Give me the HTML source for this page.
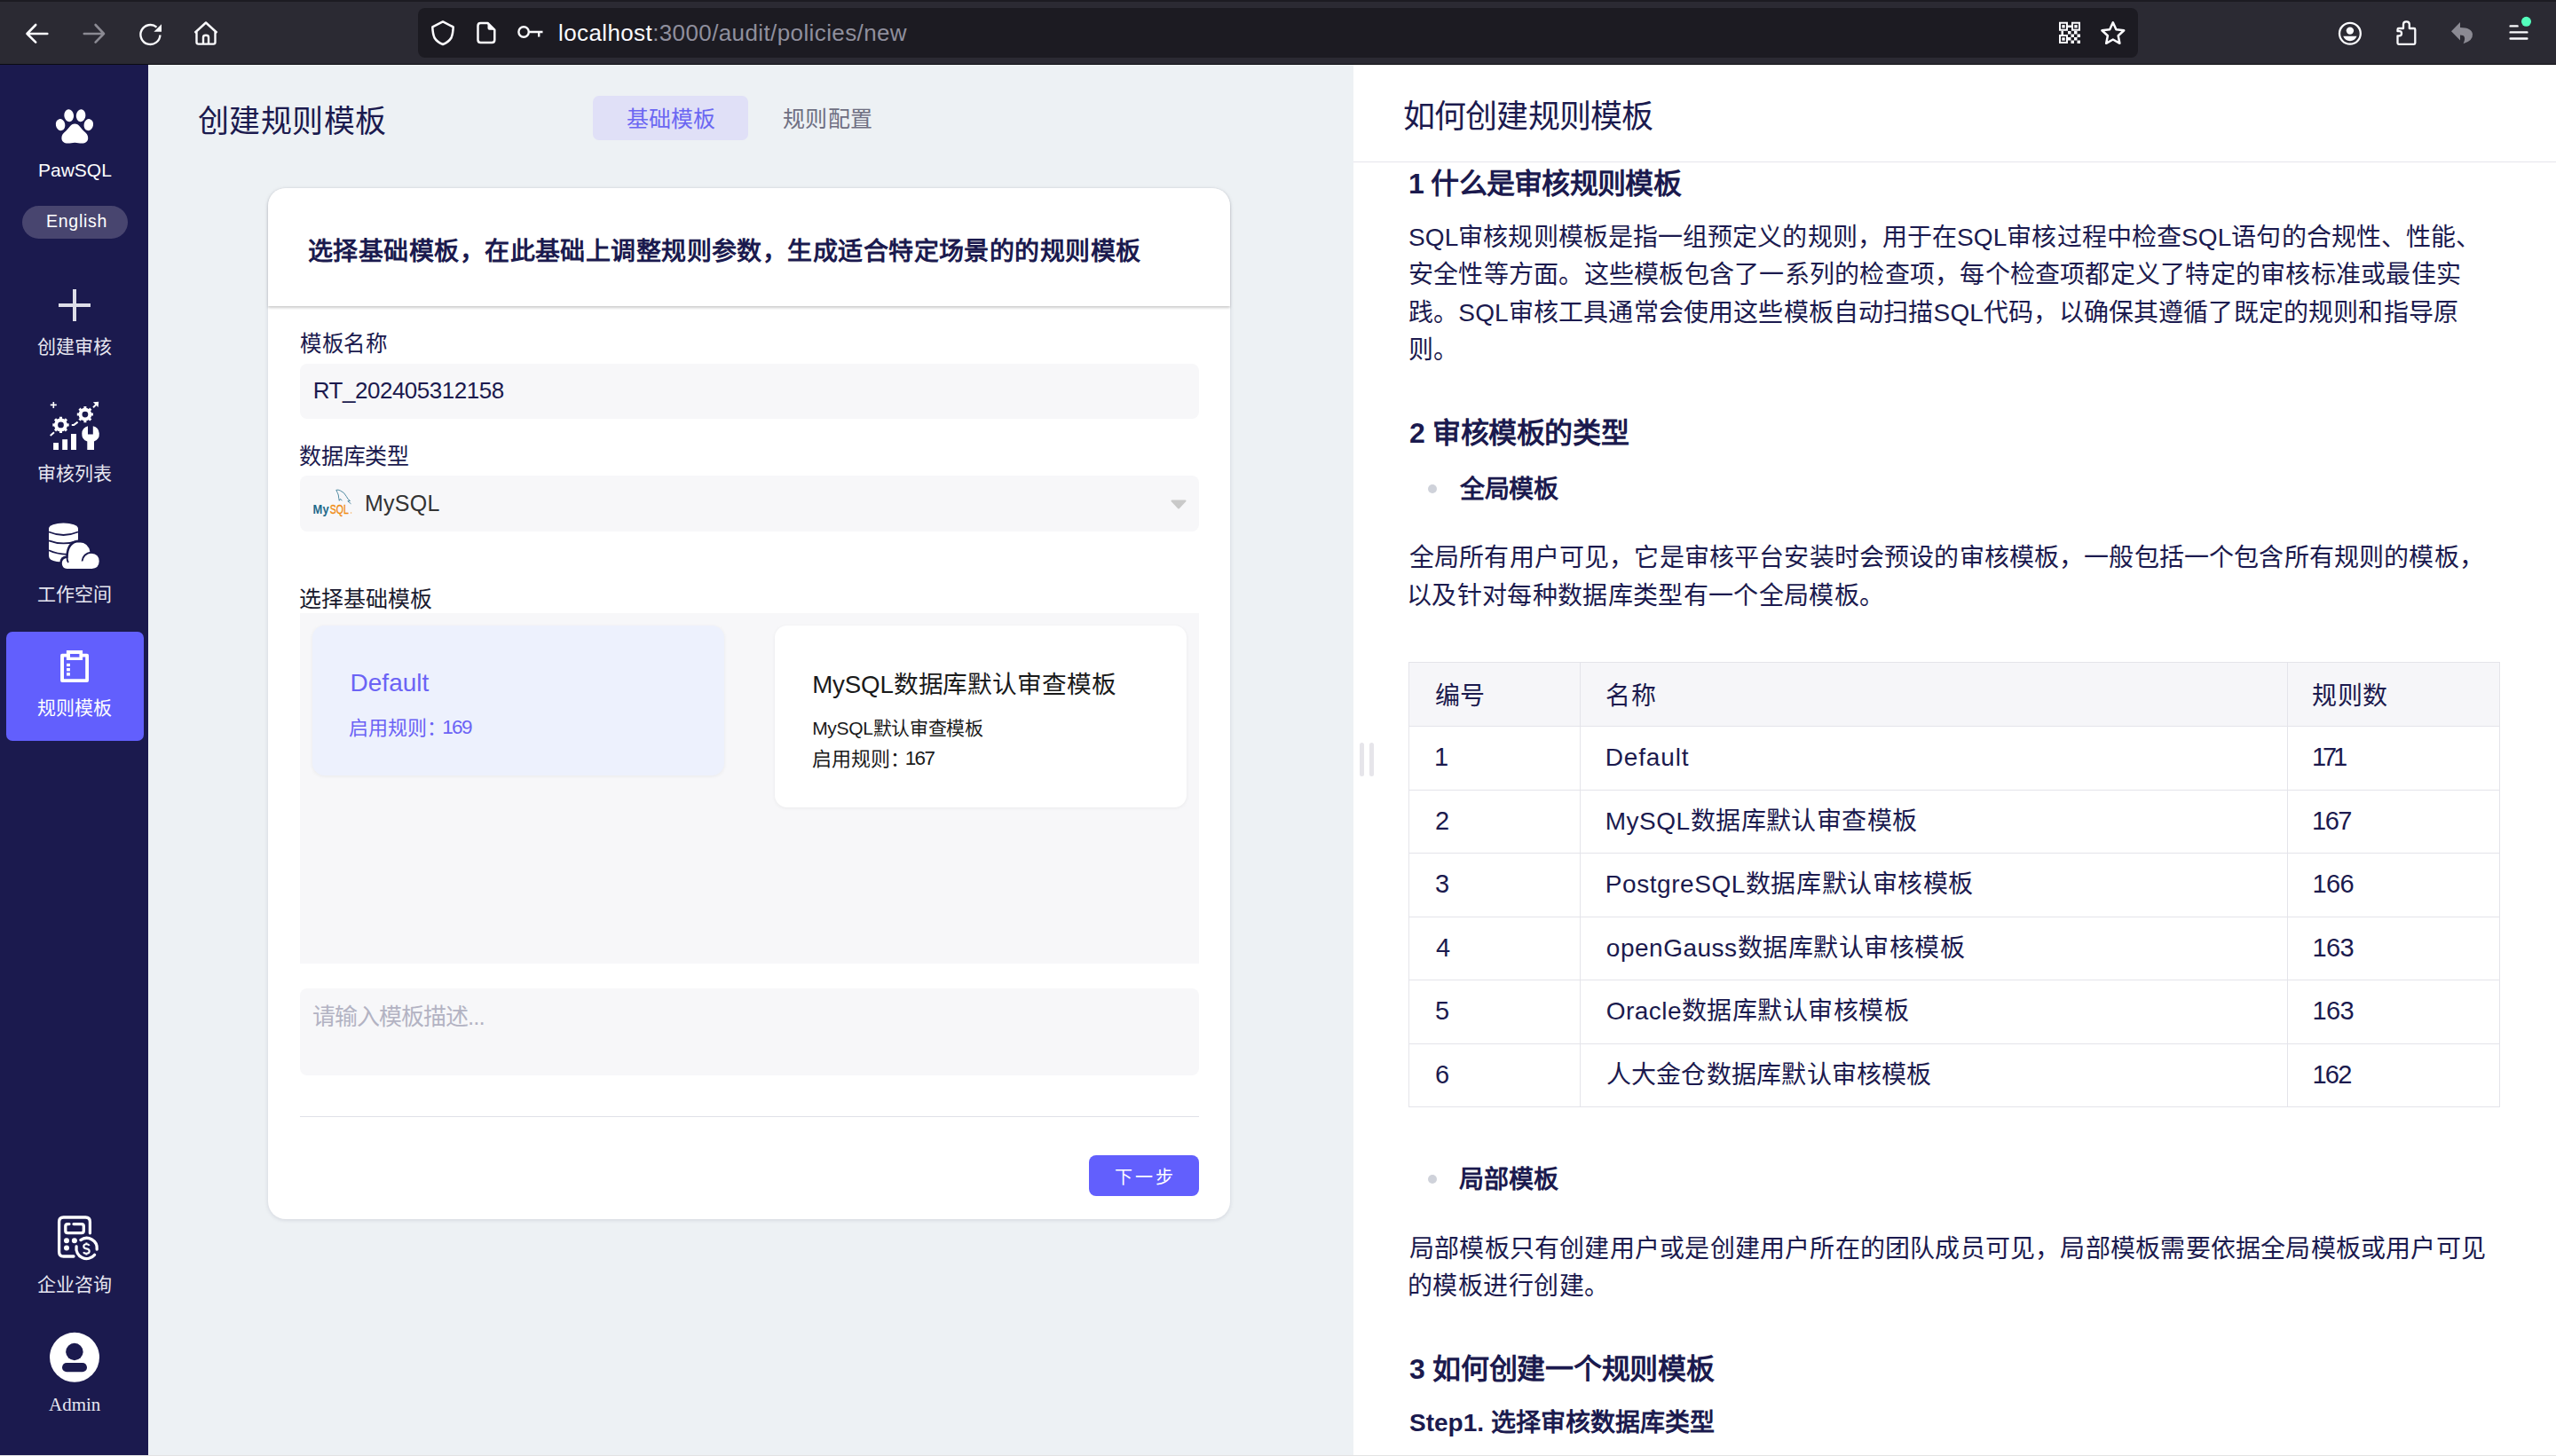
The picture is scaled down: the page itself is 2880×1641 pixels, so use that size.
<!DOCTYPE html>
<html lang="zh-CN">
<head>
<meta charset="utf-8">
<style>
*{box-sizing:border-box;margin:0;padding:0}
html,body{width:2880px;height:1641px;overflow:hidden;background:#fff}
body{position:relative;font-family:"Liberation Sans",sans-serif;color:#1b1a4e}
.a{position:absolute}
.t{position:absolute;white-space:nowrap;line-height:1}
/* browser chrome */
#topstrip{left:0;top:0;width:2880px;height:2px;background:#1c1b22}
#toolbar{left:0;top:2px;width:2880px;height:70px;background:#2b2a33}
#tbline{left:0;top:72px;width:2880px;height:1px;background:#0b0b0f}
#urlbar{left:471px;top:9px;width:1938px;height:56px;background:#1c1b22;border-radius:8px}
/* layout */
#sidebar{left:0;top:73px;width:167px;height:1568px;background:#1b1a4e}
#main{left:167px;top:73px;width:1358px;height:1568px;background:#edf1f4}
#right{left:1525px;top:73px;width:1355px;height:1568px;background:#fff}
#bottomline{left:0;top:1640px;width:2880px;height:1px;background:#e3e3e3}
.sb{color:#e6e6f0;font-size:21px}
.rp{left:1588px;font-size:28px;color:#1b1a4e}
.tc{font-size:28px;color:#1b1a4e}
</style>
</head>
<body>
<div id="topstrip" class="a"></div>
<div id="toolbar" class="a"></div>
<div id="tbline" class="a"></div>
<div id="urlbar" class="a"></div>
<svg class="a" style="left:0;top:0" width="2880" height="73" viewBox="0 0 2880 73">
 <g fill="none" stroke="#fbfbfe" stroke-width="2.6" stroke-linecap="round" stroke-linejoin="round">
  <path d="M30.5 38 H53.3 M40.2 28 L30.5 38 L40.2 47.6"/>
 </g>
 <g fill="none" stroke="#8b8a93" stroke-width="2.6" stroke-linecap="round" stroke-linejoin="round">
  <path d="M94.8 38 H117 M107.6 28 L117 38 L107.6 47.6"/>
 </g>
 <g fill="none" stroke="#fbfbfe" stroke-width="2.4">
  <path d="M180.4 39.5 A11 11 0 1 1 176.5 30.6"/>
 </g>
 <path d="M182 27.2 L182 35.8 L173.4 35.8 Z" fill="#fbfbfe"/>
 <g fill="none" stroke="#fbfbfe" stroke-width="2.4" stroke-linejoin="round">
  <path d="M219.5 37 L232 25.5 L244.5 37 M221.5 36 V47.5 Q221.5 49.6 223.6 49.6 H240.4 Q242.5 49.6 242.5 47.5 V36 M229 49.5 V42 Q229 39.8 232 39.8 Q235 39.8 235 42 V49.5"/>
 </g>
 <g fill="none" stroke="#fbfbfe" stroke-width="2.5" stroke-linejoin="round">
  <path d="M499 24.4 L487.3 30.4 Q487.6 38 489.5 42.5 Q492.5 47.5 499 50 Q505.5 47.5 508.5 42.5 Q510.4 38 510.7 30.4 Z"/>
  <path d="M549.5 25.9 H541.5 Q538.5 25.9 538.5 28.9 V45.1 Q538.5 48.1 541.5 48.1 H554.3 Q557.3 48.1 557.3 45.1 V33.7 Z"/>
 </g>
 <path d="M549.5 25.9 L557.3 33.7 H551.5 Q549.5 33.7 549.5 31.7 Z" fill="#fbfbfe"/>
 <g fill="none" stroke="#fbfbfe" stroke-width="2.4" stroke-linecap="butt">
  <circle cx="590.1" cy="36" r="5.7"/>
  <path d="M595.8 36 H611.5 M607.2 36 V41.5"/>
 </g>
 <!-- QR -->
 <g fill="#fbfbfe">
  <path fill-rule="evenodd" d="M2320 24.8 h10 v10 h-10 Z M2322 26.8 v6 h6 v-6 Z"/>
  <rect x="2323.3" y="28.1" width="3.4" height="3.4"/>
  <path fill-rule="evenodd" d="M2334 24.8 h10 v10 h-10 Z M2336 26.8 v6 h6 v-6 Z"/>
  <rect x="2337.3" y="28.1" width="3.4" height="3.4"/>
  <path fill-rule="evenodd" d="M2320 39 h10 v10 h-10 Z M2322 41 v6 h6 v-6 Z"/>
  <rect x="2323.3" y="42.3" width="3.4" height="3.4"/>
  <rect x="2330" y="28.5" width="4" height="2.5"/>
  <rect x="2322.5" y="34.8" width="2.5" height="4.2"/>
  <rect x="2330" y="35" width="3.5" height="3.5"/>
  <rect x="2337" y="35" width="3.5" height="3.5"/>
  <rect x="2333.5" y="38.5" width="3.5" height="3.5"/>
  <rect x="2340.5" y="38.5" width="3.5" height="3.5"/>
  <rect x="2330" y="42" width="3.5" height="3.5"/>
  <rect x="2337" y="42" width="3.5" height="3.5"/>
  <rect x="2333.5" y="45.5" width="3.5" height="3.5"/>
  <rect x="2340.5" y="45.5" width="3.5" height="3.5"/>
 </g>
 <polygon points="2380.8,25.3 2384.4,33.3 2393.2,34.3 2386.7,40.2 2388.4,48.8 2380.8,44.5 2373.2,48.8 2374.9,40.2 2368.4,34.3 2377.2,33.3" fill="none" stroke="#fbfbfe" stroke-width="2.5" stroke-linejoin="round"/>
 <!-- account -->
 <circle cx="2647.9" cy="37.8" r="11.9" fill="none" stroke="#fbfbfe" stroke-width="2.3"/>
 <circle cx="2647.9" cy="34.6" r="4.2" fill="#fbfbfe"/>
 <path d="M2640.2 40.8 H2655.6 Q2653.5 46 2647.9 46.2 Q2642.3 46 2640.2 40.8 Z" fill="#fbfbfe"/>
 <!-- puzzle -->
 <path d="M2701.5 40.3 V48.5 Q2701.5 49.8 2702.8 49.8 H2720 Q2721.3 49.8 2721.3 48.5 V33.3 Q2721.3 32 2720 32 H2714.8 V27.5 Q2714.8 24.3 2711.4 24.3 Q2708 24.3 2708 27.5 V32 H2702.8 Q2701.5 32 2701.5 33.3 V35.2 H2703.5 Q2706 35.2 2706 37.8 Q2706 40.3 2703.5 40.3 Z" fill="none" stroke="#fbfbfe" stroke-width="2.3" stroke-linejoin="round"/>
 <!-- undo gray -->
 <path d="M2772 25 L2762 35.2 L2772 45.5 V39.5 Q2780 39.5 2775.5 49.2 Q2786.5 46 2786 38.5 Q2785 31 2772 31 Z" fill="#8b8a93"/>
 <!-- menu -->
 <g stroke="#fbfbfe" stroke-width="2.4" stroke-linecap="round">
  <path d="M2828.6 29.4 H2836.6 M2828.6 36.4 H2847.4 M2828.6 43.5 H2847.4"/>
 </g>
 <circle cx="2846.5" cy="24.3" r="5.5" fill="#54ffbd"/>
</svg>
<div class="t" id="url" style="left:629px;top:23.5px;font-size:26px;letter-spacing:0.39px;color:#fbfbfe;font-family:'Liberation Sans',sans-serif">localhost<span style="color:#8f8f9d">:3000/audit/policies/new</span></div>

<div id="sidebar" class="a"></div>
<svg class="a" style="left:0;top:0" width="167" height="1641" viewBox="0 0 167 1641">
 <!-- paw -->
 <g fill="#fff">
  <ellipse cx="77.7" cy="130.3" rx="5.4" ry="7" transform="rotate(-6 77.7 130.3)"/>
  <ellipse cx="91.1" cy="130.3" rx="5.3" ry="7" transform="rotate(6 91.1 130.3)"/>
  <ellipse cx="68.1" cy="140.6" rx="5.2" ry="6.6" transform="rotate(-12 68.1 140.6)"/>
  <ellipse cx="99.8" cy="140.6" rx="5.2" ry="6.6" transform="rotate(12 99.8 140.6)"/>
  <path d="M84.3 139.6 C79.5 139.6 77.6 144.6 74.4 147.6 C71 150.2 69.4 152.3 69.4 155.6 C69.4 159.6 72.5 161.6 76.2 161.6 C79.6 161.6 81.2 160.8 84.3 160.8 C87.4 160.8 89 161.6 92.4 161.6 C96.1 161.6 99.2 159.6 99.2 155.6 C99.2 152.3 97.6 150.2 94.2 147.6 C91 144.6 89.1 139.6 84.3 139.6 Z"/>
 </g>
 <!-- English pill -->
 <rect x="25" y="232" width="119" height="37" rx="18.5" fill="#48456f"/>
 <!-- plus -->
 <path d="M84 326 V362 M66 344 H102" stroke="#dedee8" stroke-width="4"/>
 <!-- audit list icon -->
 <g fill="#fff">
  <path d="M60.3 452.9 V460 M56.8 456.4 H63.8" stroke="#fff" stroke-width="1.6"/>
  <path d="M105 459.2 L109 455.2" stroke="#fff" stroke-width="2"/>
  <path d="M111.2 452.7 L110.6 459 L104.9 453.3 Z"/>
  <path d="M66.98 471.86 L66.97 469.73 L70.03 469.73 L70.02 471.86 L72.41 472.85 L73.91 471.33 L76.07 473.49 L74.55 474.99 L75.54 477.38 L77.67 477.37 L77.67 480.43 L75.54 480.42 L74.55 482.81 L76.07 484.31 L73.91 486.47 L72.41 484.95 L70.02 485.94 L70.03 488.07 L66.97 488.07 L66.98 485.94 L64.59 484.95 L63.09 486.47 L60.93 484.31 L62.45 482.81 L61.46 480.42 L59.33 480.43 L59.33 477.37 L61.46 477.38 L62.45 474.99 L60.93 473.49 L63.09 471.33 L64.59 472.85 Z"/>
  <circle cx="68.5" cy="478.9" r="7.4"/>
  <path d="M94.41 460.16 L94.39 458.02 L97.41 458.02 L97.39 460.16 L99.75 461.14 L101.25 459.61 L103.39 461.75 L101.86 463.25 L102.84 465.61 L104.98 465.59 L104.98 468.61 L102.84 468.59 L101.86 470.95 L103.39 472.45 L101.25 474.59 L99.75 473.06 L97.39 474.04 L97.41 476.18 L94.39 476.18 L94.41 474.04 L92.05 473.06 L90.55 474.59 L88.41 472.45 L89.94 470.95 L88.96 468.59 L86.82 468.61 L86.82 465.59 L88.96 465.61 L89.94 463.25 L88.41 461.75 L90.55 459.61 L92.05 461.14 Z"/>
  <circle cx="95.9" cy="467.1" r="7.3"/>
  <path d="M80.8 478.9 H83.3 L87.6 475.6 M56.7 490.9 L61 487.2" fill="none" stroke="#fff" stroke-width="2"/>
  <rect x="60.1" y="499.1" width="5.9" height="7.9"/>
  <rect x="70.2" y="495.2" width="5.9" height="11.8"/>
  <rect x="80" y="489" width="6" height="18"/>
  <path d="M99 480.3 A9 9 0 0 0 98.3 497.5 V507 H106 V497.5 A9 9 0 0 0 104.8 480.3 V489.6 H99 Z"/>
 </g>
 <g fill="#1b1a4e">
  <circle cx="68.5" cy="478.9" r="3.4"/>
  <circle cx="95.9" cy="467.1" r="3.4"/>
 </g>
 <!-- workspace icon -->
 <g>
  <path d="M55 595.9 V626.5 Q55 631.5 64 633 L71 633.5 L88 622 V595.9 Z" fill="#fff"/>
  <ellipse cx="71.5" cy="595.9" rx="16.5" ry="6.5" fill="#fff"/>
  <path d="M55 599.5 Q71.5 606.5 88 599.5 M55 609.3 Q71.5 615.5 88 609.3 M55 620.2 Q64 624.5 76 624.8" fill="none" stroke="#1b1a4e" stroke-width="1.8"/>
  <path d="M75.5 642.3 Q68.5 642 68.5 634.8 Q68.6 628 75.5 627.6 Q76 610.3 89.3 610 Q101 610.2 102.9 622.5 Q113 623.3 113 632.5 Q112.8 641.9 103.5 642.3 Z" fill="#fff" stroke="#1b1a4e" stroke-width="2.6"/>
  <path d="M75.5 627.6 Q75.5 632 77 634 M102.9 622.5 Q93.5 624 92.5 632.5" fill="none" stroke="#1b1a4e" stroke-width="1.8"/>
 </g>
 <!-- active item -->
 <rect x="7" y="712" width="155" height="123" rx="7" fill="#625ffd"/>
 <g fill="#fff">
  <path fill-rule="evenodd" d="M70 736.8 H98 Q100 736.8 100 738.8 V767 Q100 769 98 769 H70 Q68.1 769 68.1 767 V738.8 Q68.1 736.8 70 736.8 Z M72 740.6 V765.2 H96.2 V740.6 Z"/>
  <path fill-rule="evenodd" d="M74.9 733.1 H93.1 V743.9 H74.9 Z M79 737 V740.6 H89.4 V737 Z"/>
  <rect x="79" y="737" width="10.4" height="3.6" fill="#625ffd"/>
  <rect x="75.1" y="747.8" width="3.8" height="3.3"/>
  <rect x="75.1" y="753" width="3.8" height="3.4"/>
  <rect x="75.1" y="758.1" width="3.8" height="3.5"/>
 </g>
 <!-- consult icon -->
 <g fill="none" stroke="#fff" stroke-width="3.3" stroke-linecap="round">
  <path d="M101.4 1389.8 V1377 Q101.4 1372 96.4 1372 H71.6 Q66.6 1372 66.6 1377 V1411 Q66.6 1416 71.6 1416 H83"/>
  <path d="M78 1379.6 H76.2 Q73.8 1379.6 73.8 1382 V1387.3 Q73.8 1389.7 76.2 1389.7 H91.9 Q94.3 1389.7 94.3 1387.3 V1382 Q94.3 1379.6 91.9 1379.6 H83"/>
  <path d="M90.9 1397.6 A11.6 11.6 0 0 1 109.2 1408.2"/>
  <path d="M106.6 1414.2 A11.6 11.6 0 0 1 86.1 1405"/>
 </g>
 <g fill="#fff">
  <circle cx="75" cy="1398.2" r="3"/>
  <circle cx="83.9" cy="1398.2" r="3"/>
  <circle cx="75" cy="1406.6" r="3"/>
 </g>
 <path d="M100.7 1403.9 Q99.9 1402.3 97.4 1402.3 Q94.3 1402.3 94.3 1404.8 Q94.3 1407 97.4 1407.4 Q100.7 1407.8 100.7 1410.3 Q100.7 1412.8 97.4 1412.8 Q94.8 1412.8 94 1411.2 M97.4 1400.4 V1402.5 M97.4 1412.6 V1414.6" fill="none" stroke="#fff" stroke-width="2.1"/>
 <!-- avatar -->
 <circle cx="84" cy="1529.8" r="28" fill="#fff"/>
 <circle cx="83.9" cy="1523.5" r="9.7" fill="#1b1a4e"/>
 <rect x="70" y="1536.1" width="28" height="10.1" rx="5.05" fill="#1b1a4e"/>
</svg>
<div class="t sb" id="s_paw" style="left:43px;top:181px;font-size:21px;color:#fff">PawSQL</div>
<div class="t sb" id="s_en" style="left:52px;top:240px;font-size:19.5px;letter-spacing:0.75px;color:#fff">English</div>
<div class="t sb" id="s_c1" style="left:42px;top:380px">创建审核</div>
<div class="t sb" id="s_c2" style="left:42px;top:523.0px">审核列表</div>
<div class="t sb" id="s_c3" style="left:42px;top:659.0px">工作空间</div>
<div class="t sb" id="s_c4" style="left:42px;top:787px;color:#fff">规则模板</div>
<div class="t sb" id="s_c5" style="left:42px;top:1438px;font-family:'Liberation Serif',serif">企业咨询</div>
<div class="t sb" id="s_adm" style="left:55px;top:1573px;font-family:'Liberation Serif',serif;font-size:21px">Admin</div>
<div id="main" class="a"></div>
<div class="t" id="m_title" style="left:223.0px;top:119.0px;font-size:35px;color:#1b1a4e;letter-spacing:0.40px">创建规则模板</div>
<div class="a" style="left:668px;top:108px;width:175px;height:50px;border-radius:7px;background:#e0e0f7"></div>
<div class="t" id="m_tab1" style="left:706.0px;top:122.0px;font-size:25px;color:#6b67f2;letter-spacing:0.00px">基础模板</div>
<div class="t" id="m_tab2" style="left:882.0px;top:122.0px;font-size:25px;color:#6f6f82;letter-spacing:0.33px">规则配置</div>
<!-- card -->
<div class="a" id="card" style="left:302px;top:212px;width:1084px;height:1162px;border-radius:20px;background:#fff;box-shadow:0 1px 5px rgba(20,20,60,0.12)"></div>
<div class="a" style="left:302px;top:212px;width:1084px;height:133px;border-radius:20px 20px 0 0;background:#fff;box-shadow:0 1.5px 3px rgba(0,0,0,0.2)"></div>
<div class="t" id="m_head" style="left:347.0px;top:270.0px;font-size:28px;letter-spacing:0.44px;font-weight:bold;color:#1b1a4e">选择基础模板，在此基础上调整规则参数，生成适合特定场景的的规则模板</div>
<div class="t" id="m_l1" style="left:338.0px;top:375.5px;font-size:24.5px;color:#1b1a4e;letter-spacing:0.67px">模板名称</div>
<div class="a" style="left:338px;top:410px;width:1013px;height:62px;border-radius:8px;background:#f7f7f9"></div>
<div class="t" id="m_in1" style="left:352.8px;top:427.3px;font-size:26px;letter-spacing:-0.49px;color:#1b1a4e">RT_202405312158</div>
<div class="t" id="m_l2" style="left:336.8px;top:502.0px;font-size:25px;color:#1b1a4e;letter-spacing:-0.10px">数据库类型</div>
<div class="a" style="left:338px;top:536px;width:1013px;height:63px;border-radius:8px;background:#f7f7f9"></div>
<svg class="a" style="left:348px;top:545px" width="54" height="45" viewBox="0 0 54 45">
 <text x="4.6" y="34" font-family="Liberation Sans" font-size="14" font-weight="bold" fill="#1f6a8c" textLength="18" lengthAdjust="spacingAndGlyphs">My</text>
 <text x="23.8" y="34" font-family="Liberation Sans" font-size="14" fill="#f08a0e" stroke="#f08a0e" stroke-width="0.35" textLength="21" lengthAdjust="spacingAndGlyphs">SQL</text>
 <circle cx="47.6" cy="33" r="0.8" fill="#f4b060"/>
 <path d="M30.8 7.3 Q33 6.6 35.5 8 Q40 9.8 42.3 14.5 Q43.5 17.5 46.5 19.5 L43.8 19.8 L47.5 22.8 M30.8 7.3 Q32.5 10.5 33.3 13 Q33.6 16.5 34.3 19.3 L35.5 17.2 L37.4 19.3" fill="none" stroke="#3f7f99" stroke-width="0.9" stroke-linejoin="round"/>
</svg>
<div class="t" id="m_mysql" style="left:411.0px;top:555.0px;font-size:25px;color:#333;letter-spacing:0.25px">MySQL</div>
<svg class="a" style="left:1318px;top:562px" width="20" height="13" viewBox="0 0 20 13"><path d="M2.5 2.5 H17.5 L10 10.5 Z" fill="#c9c9c9" stroke="#c9c9c9" stroke-width="2" stroke-linejoin="round"/></svg>
<div class="t" id="m_l3" style="left:337.0px;top:662.5px;font-size:25px;color:#1a1a2e;letter-spacing:0.00px">选择基础模板</div>
<div class="a" style="left:338px;top:691px;width:1013px;height:395px;background:#f7f7f9"></div>
<div class="a" style="left:351.5px;top:705px;width:464px;height:169px;border-radius:14px;background:#edf1fd;box-shadow:0 1px 4px rgba(0,0,0,0.06)"></div>
<div class="t" id="m_def" style="left:394.5px;top:756.0px;font-size:28px;color:#6b63f5;letter-spacing:0.02px">Default</div>
<div class="t" id="m_def2" style="left:393.2px;top:810.2px;font-size:22px;color:#6b63f5">启用规则：<span style="position:absolute;left:105px;top:-1px;font-size:22.5px;letter-spacing:-1.6px">169</span></div>
<div class="a" style="left:873px;top:705px;width:464px;height:205px;border-radius:14px;background:#fff;box-shadow:0 1px 4px rgba(0,0,0,0.06)"></div>
<div class="t" id="m_my1" style="left:915.2px;top:758.3px;font-size:27.7px;color:#1a1a1a;letter-spacing:-0.15px">MySQL数据库默认审查模板</div>
<div class="t" id="m_my2" style="left:915.2px;top:809.7px;font-size:21px;color:#1a1a1a;letter-spacing:-0.32px">MySQL默认审查模板</div>
<div class="t" id="m_my3" style="left:914.7px;top:845.4px;font-size:22px;color:#1a1a1a">启用规则：<span style="position:absolute;left:105px;top:-1px;font-size:22.5px;letter-spacing:-1.6px">167</span></div>
<div class="a" style="left:338px;top:1114px;width:1013px;height:98px;border-radius:8px;background:#f7f7f9"></div>
<div class="t" id="m_ph" style="left:352.4px;top:1133.3px;font-size:26px;color:#b3b3c3;letter-spacing:-1.05px">请输入模板描述...</div>
<div class="a" style="left:338px;top:1258px;width:1013px;height:1px;background:#dfe1e8"></div>
<div class="a" style="left:1227px;top:1302px;width:124px;height:46px;border-radius:8px;background:#625ffd"></div>
<div class="t" id="m_next" style="left:1256.0px;top:1317.0px;font-size:20px;color:#fff;letter-spacing:3.00px">下一步</div>

<div id="right" class="a"></div>
<div class="a" style="left:1532px;top:837px;width:5.4px;height:38px;border-radius:3px;background:#e6e5ea"></div>
<div class="a" style="left:1543px;top:837px;width:5.4px;height:38px;border-radius:3px;background:#e6e5ea"></div>
<div class="a" style="left:1525px;top:182px;width:1355px;height:1px;background:#e6e5ec"></div>
<!-- right panel content -->
<div class="t" id="r_title" style="left:1581.0px;top:114.0px;font-size:36px;color:#1b1a4e;letter-spacing:-0.86px">如何创建规则模板</div>
<div class="t" id="r_h1" style="left:1587.0px;top:191.0px;font-size:32px;font-weight:bold;color:#1b1a4e;letter-spacing:-0.70px">1 什么是审核规则模板</div>
<div class="t rp" id="r_p1a" style="left:1587.0px;top:254.0px;letter-spacing:0.09px">SQL审核规则模板是指一组预定义的规则，用于在SQL审核过程中检查SQL语句的合规性、性能、</div>
<div class="t rp" id="r_p1b" style="left:1587.0px;top:296.4px;letter-spacing:0.24px">安全性等方面。这些模板包含了一系列的检查项，每个检查项都定义了特定的审核标准或最佳实</div>
<div class="t rp" id="r_p1c" style="left:1587.0px;top:338.8px;letter-spacing:0.16px">践。SQL审核工具通常会使用这些模板自动扫描SQL代码，以确保其遵循了既定的规则和指导原</div>
<div class="t rp" id="r_p1d" style="left:1587.0px;top:380.8px">则。</div>
<div class="t" id="r_h2" style="left:1588.0px;top:471.8px;font-size:32px;font-weight:bold;color:#1b1a4e;letter-spacing:-0.38px">2 审核模板的类型</div>
<div class="a" style="left:1609px;top:545.5px;width:10px;height:10px;border-radius:5px;background:#cfd2da"></div>
<div class="t" id="r_b1" style="left:1645.0px;top:537.8px;font-size:28px;font-weight:bold;color:#1b1a4e;letter-spacing:-0.33px">全局模板</div>
<div class="t rp" id="r_p2a" style="left:1588.0px;top:614.8px;letter-spacing:0.16px">全局所有用户可见，它是审核平台安装时会预设的审核模板，一般包括一个包含所有规则的模板，</div>
<div class="t rp" id="r_p2b" style="left:1585.0px;top:657.8px;letter-spacing:0.33px">以及针对每种数据库类型有一个全局模板。</div>
<!-- table -->
<div class="a" id="tbl" style="left:1587px;top:746px;width:1230px;height:502px;border:1px solid #e4e4ea;background:#fff"></div>
<div class="a" style="left:1588px;top:747px;width:1228px;height:72px;background:#f6f6f9"></div>
<div class="a" style="left:1588px;top:818px;width:1228px;height:1px;background:#e4e4ea"></div>
<div class="a" style="left:1588px;top:890px;width:1228px;height:1px;background:#e4e4ea"></div>
<div class="a" style="left:1588px;top:961px;width:1228px;height:1px;background:#e4e4ea"></div>
<div class="a" style="left:1588px;top:1033px;width:1228px;height:1px;background:#e4e4ea"></div>
<div class="a" style="left:1588px;top:1104px;width:1228px;height:1px;background:#e4e4ea"></div>
<div class="a" style="left:1588px;top:1176px;width:1228px;height:1px;background:#e4e4ea"></div>
<div class="a" style="left:1780px;top:747px;width:1px;height:500px;background:#e4e4ea"></div>
<div class="a" style="left:2577px;top:747px;width:1px;height:500px;background:#e4e4ea"></div>
<div class="a" id="t_r0" style="left:0px;top:770.8px;width:2880px;height:40px"><div class="t tc" id="t_r0a" style="left:1617px;top:0px">编号</div><div class="t tc" id="t_r0b" style="left:1809.0px;top:0px;letter-spacing:1.00px">名称</div><div class="t tc" id="t_r0c" style="left:2605.0px;top:0px;letter-spacing:0.50px">规则数</div></div>
<div class="a" id="t_r1" style="left:0px;top:837.8px;width:2880px;height:40px"><div class="t tc" id="t_r1a" style="left:1616.0px;top:1.5px;font-size:29px">1</div><div class="t tc" id="t_r1b" style="left:1808.8px;top:2.5px;letter-spacing:0.83px">Default</div><div class="t tc" id="t_r1c" style="left:2605.0px;top:1.5px;letter-spacing:-4.10px;font-size:29px">171</div></div>
<div class="a" id="t_r2" style="left:0px;top:909.8px;width:2880px;height:40px"><div class="t tc" id="t_r2a" style="left:1617.0px;top:1.5px;font-size:29px">2</div><div class="t tc" id="t_r2b" style="left:1808.8px;top:2.5px;letter-spacing:0.48px">MySQL数据库默认审查模板</div><div class="t tc" id="t_r2c" style="left:2605.0px;top:1.5px;letter-spacing:-1.50px;font-size:29px">167</div></div>
<div class="a" id="t_r3" style="left:0px;top:980.8px;width:2880px;height:40px"><div class="t tc" id="t_r3a" style="left:1617.0px;top:1.5px;font-size:29px">3</div><div class="t tc" id="t_r3b" style="left:1808.8px;top:2.5px;letter-spacing:0.56px">PostgreSQL数据库默认审核模板</div><div class="t tc" id="t_r3c" style="left:2605.4px;top:1.5px;letter-spacing:-0.60px;font-size:29px">166</div></div>
<div class="a" id="t_r4" style="left:0px;top:1052.8px;width:2880px;height:40px"><div class="t tc" id="t_r4a" style="left:1618.0px;top:1.5px;font-size:29px">4</div><div class="t tc" id="t_r4b" style="left:1809.8px;top:2.5px;letter-spacing:0.51px">openGauss数据库默认审核模板</div><div class="t tc" id="t_r4c" style="left:2605.4px;top:1.5px;letter-spacing:-0.60px;font-size:29px">163</div></div>
<div class="a" id="t_r5" style="left:0px;top:1123.8px;width:2880px;height:40px"><div class="t tc" id="t_r5a" style="left:1617.0px;top:1.5px;font-size:29px">5</div><div class="t tc" id="t_r5b" style="left:1809.8px;top:2.5px;letter-spacing:0.45px">Oracle数据库默认审核模板</div><div class="t tc" id="t_r5c" style="left:2605.4px;top:1.5px;letter-spacing:-0.60px;font-size:29px">163</div></div>
<div class="a" id="t_r6" style="left:0px;top:1195.8px;width:2880px;height:40px"><div class="t tc" id="t_r6a" style="left:1617.0px;top:1.5px;font-size:29px">6</div><div class="t tc" id="t_r6b" style="left:1809.8px;top:2.5px;letter-spacing:0.22px">人大金仓数据库默认审核模板</div><div class="t tc" id="t_r6c" style="left:2605.4px;top:1.5px;letter-spacing:-1.70px;font-size:29px">162</div></div>
<div class="a" style="left:1608.6px;top:1323.5px;width:10px;height:10px;border-radius:5px;background:#cfd2da"></div>
<div class="t" id="r_b2" style="left:1644.0px;top:1315.5px;font-size:28px;font-weight:bold;color:#1b1a4e;letter-spacing:0.00px">局部模板</div>
<div class="t rp" id="r_p3a" style="left:1588.0px;top:1393.5px;letter-spacing:0.21px">局部模板只有创建用户或是创建用户所在的团队成员可见，局部模板需要依据全局模板或用户可见</div>
<div class="t rp" id="r_p3b" style="left:1586.0px;top:1435.5px;letter-spacing:0.43px">的模板进行创建。</div>
<div class="t" id="r_h3" style="left:1588.0px;top:1526.8px;font-size:32px;font-weight:bold;color:#1b1a4e;letter-spacing:-0.27px">3 如何创建一个规则模板</div>
<div class="t" id="r_s1" style="left:1588.0px;top:1590.0px;font-size:28px;font-weight:bold;color:#1b1a4e;letter-spacing:0.00px">Step1. 选择审核数据库类型</div>
<div id="bottomline" class="a"></div>
</body>
</html>
